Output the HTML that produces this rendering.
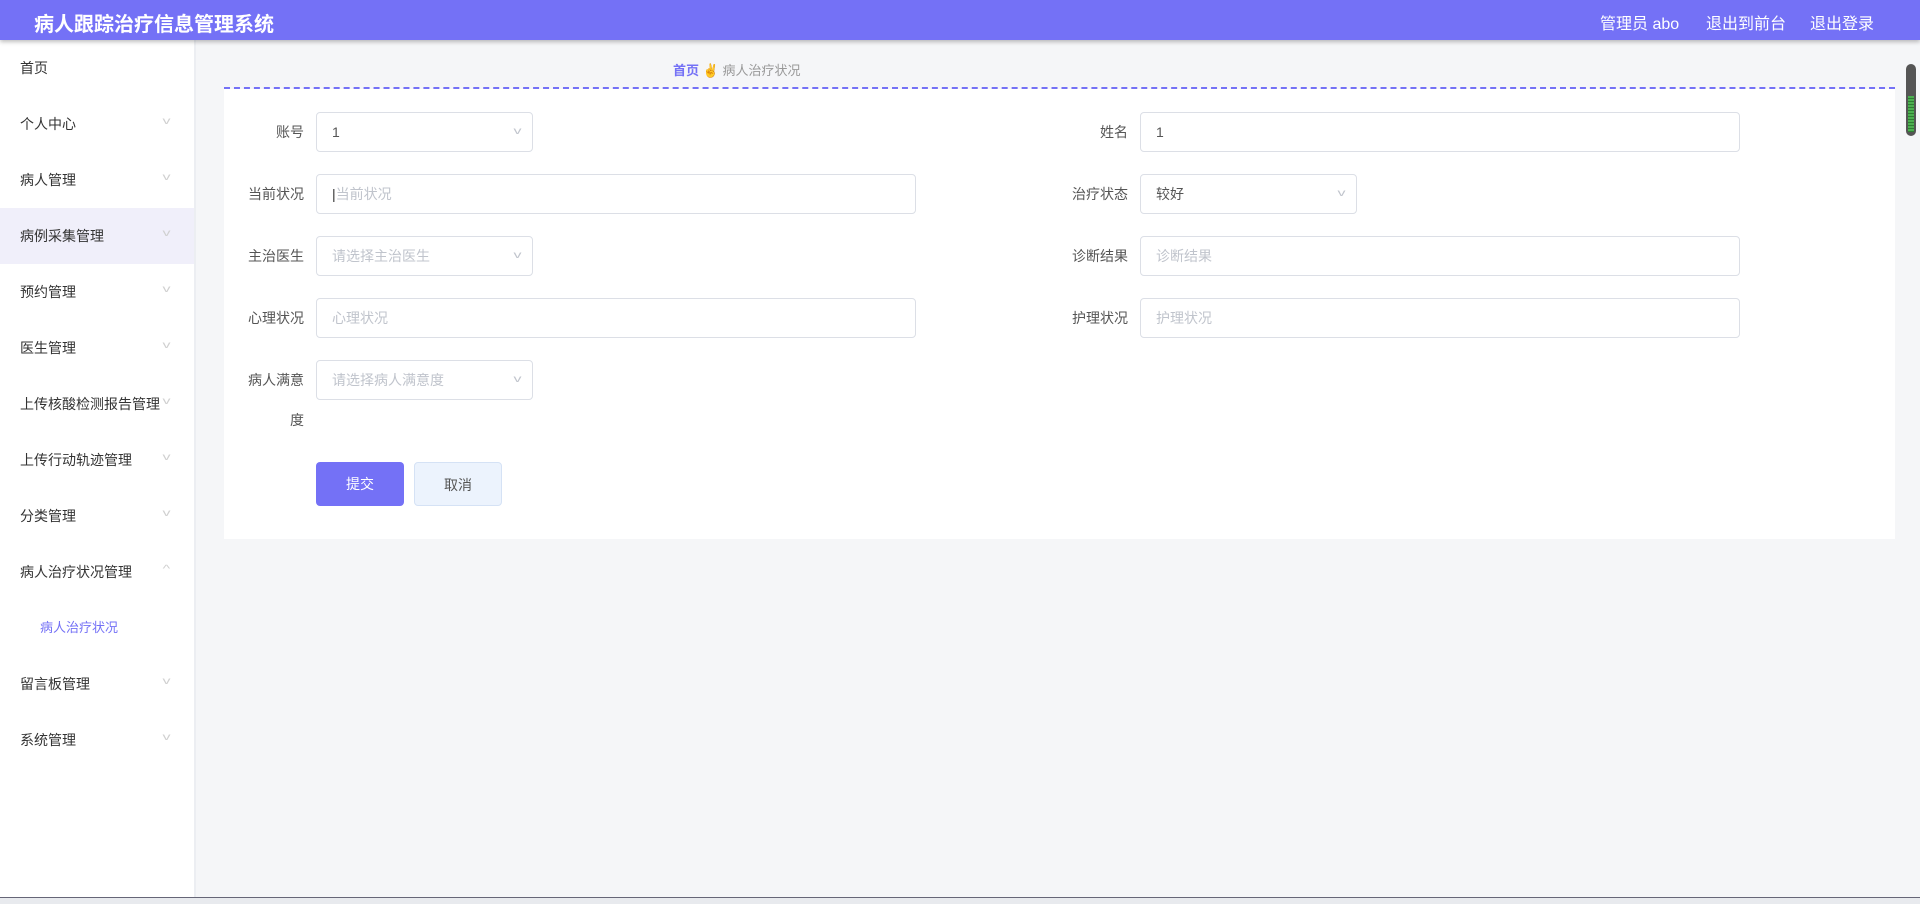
<!DOCTYPE html>
<html><head><meta charset="utf-8"><style>
*{box-sizing:border-box;margin:0;padding:0}
body{width:1920px;height:904px;overflow:hidden;background:#f5f6f8;font-family:"Liberation Sans","Noto Sans CJK SC",sans-serif;font-size:14px;color:#333;position:relative}
.hd{position:absolute;left:0;top:0;width:1920px;height:40px;background:#7471f6;box-shadow:0 2px 4px rgba(0,0,0,.25);color:#fff;z-index:2}
.hd .t{position:absolute;left:34px;top:8px;font-size:20px;font-weight:bold}
.hd .r{position:absolute;top:10px;font-size:16px}
.sb{position:absolute;left:0;top:40px;width:196px;height:857px;background:#fff;border-right:2px solid #eceef2}
.mi{position:absolute;left:0;width:194px;height:56px;line-height:56px;padding-left:20px;font-size:14px;color:#333}
.mi .c{position:absolute;left:164px;top:-2px;color:#d0d0d0;font-size:10px;transform:scaleX(1.6)}
.bc{position:absolute;top:60px;left:673px;font-size:13px}
.dash{position:absolute;left:224px;top:87px;width:1671px;border-top:2px dashed #7471f6}
.card{position:absolute;left:224px;top:89px;width:1671px;height:450px;background:#fff}
.lb{position:absolute;font-size:14px;color:#555;text-align:right;width:100px}
.in{position:absolute;height:40px;border:1px solid #dcdfe6;border-radius:4px;line-height:38px;padding-left:15px;font-size:14px;color:#555;background:#fff}
.in.p{color:#c0c4cc}
.in .ar{position:absolute;right:12px;top:0;color:#c0c4cc;font-size:10px;transform:scaleX(1.6)}
.btn{position:absolute;top:462px;height:44px;width:88px;border-radius:4px;text-align:center;line-height:44px;font-size:14px}
</style></head><body>
<div class="hd"><div class="t">病人跟踪治疗信息管理系统</div>
<div class="r" style="left:1600px">管理员 abo</div><div class="r" style="left:1706px">退出到前台</div><div class="r" style="left:1810px">退出登录</div></div>
<div class="sb">
<div class="mi" style="top:0">首页</div>
<div class="mi" style="top:56px">个人中心<span class="c">v</span></div>
<div class="mi" style="top:112px">病人管理<span class="c">v</span></div>
<div class="mi" style="top:168px;background:#f0effa">病例采集管理<span class="c">v</span></div>
<div class="mi" style="top:224px">预约管理<span class="c">v</span></div>
<div class="mi" style="top:280px">医生管理<span class="c">v</span></div>
<div class="mi" style="top:336px">上传核酸检测报告管理<span class="c">v</span></div>
<div class="mi" style="top:392px">上传行动轨迹管理<span class="c">v</span></div>
<div class="mi" style="top:448px">分类管理<span class="c">v</span></div>
<div class="mi" style="top:504px">病人治疗状况管理<span class="c">^</span></div>
<div class="mi" style="top:560px;padding-left:40px;color:#7471f6;font-size:13px">病人治疗状况</div>
<div class="mi" style="top:616px">留言板管理<span class="c">v</span></div>
<div class="mi" style="top:672px">系统管理<span class="c">v</span></div>
</div>
<div class="bc"><span style="color:#7471f6;font-weight:bold">首页</span> <span style="color:#e8a000">✌</span> <span style="color:#999">病人治疗状况</span></div>
<div class="dash"></div>
<div class="card"></div>
<div class="lb" style="left:204px;top:122px">账号</div>
<div class="in" style="left:316px;top:112px;width:217px">1<span class="ar">v</span></div>
<div class="lb" style="left:1028px;top:122px">姓名</div>
<div class="in" style="left:1140px;top:112px;width:600px">1</div>
<div class="lb" style="left:204px;top:184px">当前状况</div>
<div class="in p" style="left:316px;top:174px;width:600px"><span style="color:#333">|</span>当前状况</div>
<div class="lb" style="left:1028px;top:184px">治疗状态</div>
<div class="in" style="left:1140px;top:174px;width:217px">较好<span class="ar">v</span></div>
<div class="lb" style="left:204px;top:246px">主治医生</div>
<div class="in p" style="left:316px;top:236px;width:217px">请选择主治医生<span class="ar">v</span></div>
<div class="lb" style="left:1028px;top:246px">诊断结果</div>
<div class="in p" style="left:1140px;top:236px;width:600px">诊断结果</div>
<div class="lb" style="left:204px;top:308px">心理状况</div>
<div class="in p" style="left:316px;top:298px;width:600px">心理状况</div>
<div class="lb" style="left:1028px;top:308px">护理状况</div>
<div class="in p" style="left:1140px;top:298px;width:600px">护理状况</div>
<div class="lb" style="left:204px;top:370px">病人满意</div>
<div class="lb" style="left:204px;top:410px">度</div>
<div class="in p" style="left:316px;top:360px;width:217px">请选择病人满意度<span class="ar">v</span></div>
<div class="btn" style="left:316px;background:#7471f6;color:#fff">提交</div>
<div class="btn" style="left:414px;background:#ecf3fd;border:1px solid #d5e2f5;color:#555">取消</div>
<div style="position:absolute;left:1906px;top:64px;width:10px;height:72px;border-radius:5px;background:#555"></div>
<div style="position:absolute;left:1908px;top:96px;width:6px;height:36px;background:repeating-linear-gradient(#4caf50 0 2px,#2e7d32 2px 3px)"></div>
<div style="position:absolute;left:0;top:897px;width:1920px;height:7px;background:#e8eaee;border-top:1px solid #667"></div>
</body></html>
